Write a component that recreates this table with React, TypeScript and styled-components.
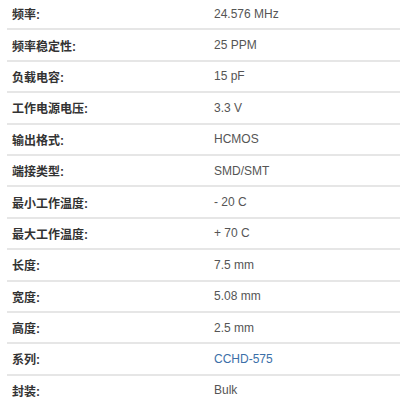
import React from "react";
import styled, { createGlobalStyle } from "styled-components";

const GlobalStyle = createGlobalStyle`
  body {
    margin: 0;
    background: #ffffff;
  }
`;

const Page = styled.div`
  width: 400px;
  height: 400px;
  overflow: hidden;
  padding-left: 7px;
  box-sizing: border-box;
`;

const Table = styled.div`
  margin-top: -1px;
  width: 410px;
`;

const Row = styled.div`
  display: grid;
  grid-template-columns: 207px 1fr;
  align-items: center;
  height: 31.4px;
  box-sizing: border-box;
  border-bottom: 2px solid #e6e6e6;
`;

const Label = styled.div`
  padding-left: 5px;
  font-family: "Liberation Sans", "Noto Sans CJK SC", sans-serif;
  font-size: 12px;
  font-weight: bold;
  color: #333333;
`;

const Value = styled.div<{ $link?: boolean }>`
  font-family: "Liberation Sans", "Noto Sans CJK SC", sans-serif;
  font-size: 12px;
  color: ${(p) => (p.$link ? "#3b6fa8" : "#555555")};
`;

const specs: { label: string; value: string; link?: boolean }[] = [
  { label: "频率:", value: "24.576 MHz" },
  { label: "频率稳定性:", value: "25 PPM" },
  { label: "负载电容:", value: "15 pF" },
  { label: "工作电源电压:", value: "3.3 V" },
  { label: "输出格式:", value: "HCMOS" },
  { label: "端接类型:", value: "SMD/SMT" },
  { label: "最小工作温度:", value: "- 20 C" },
  { label: "最大工作温度:", value: "+ 70 C" },
  { label: "长度:", value: "7.5 mm" },
  { label: "宽度:", value: "5.08 mm" },
  { label: "高度:", value: "2.5 mm" },
  { label: "系列:", value: "CCHD-575", link: true },
  { label: "封装:", value: "Bulk" },
];

export default function App() {
  return (
    <>
      <GlobalStyle />
      <Page>
        <Table>
          {specs.map((s) => (
            <Row key={s.label}>
              <Label>{s.label}</Label>
              <Value $link={s.link}>{s.value}</Value>
            </Row>
          ))}
        </Table>
      </Page>
    </>
  );
}
